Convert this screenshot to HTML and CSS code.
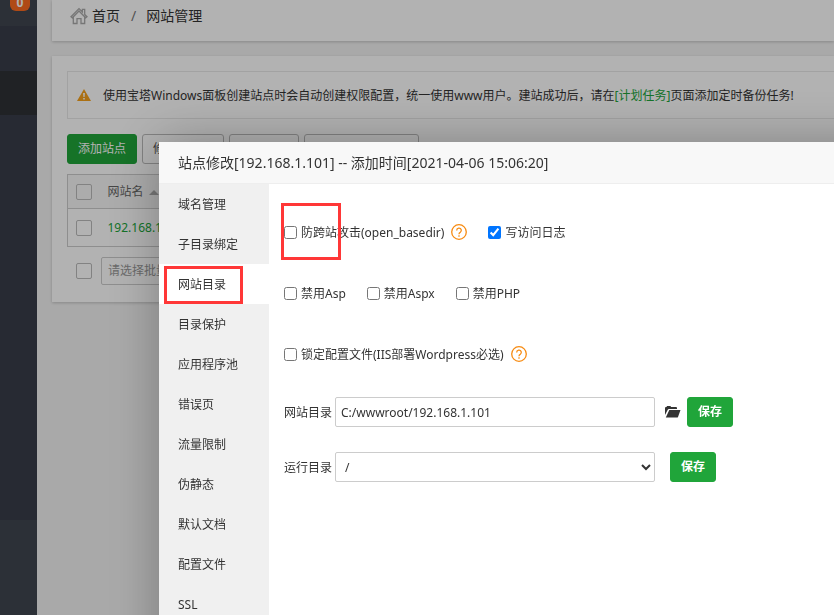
FILE: index.html
```html
<!DOCTYPE html>
<html lang="zh-CN">
<head>
<meta charset="utf-8">
<title>网站管理</title>
<link rel="stylesheet" href="styles.css">
</head>
<body>
<div class="page">
  <nav class="sidebar">
    <div class="sidebar-top"><span class="badge">0</span></div>
    <div class="sidebar-item"></div>
    <div class="sidebar-item current"></div>
    <div class="sidebar-rest"></div>
  </nav>
  <main class="main">
    <header class="crumbs">
      <svg class="home" viewBox="0 0 18 18" aria-hidden="true"><path d="M1 9.8 9 1.6l3.4 3.4V2.4h2.3v5L17 9.8l-1.3 1L9 4 2.300 10.800zM3.300 10.200V16.500H7v-4.800h4v4.800h3.700V10.200"/></svg>
      <a href="#">首页</a><span class="slash">/</span><span>网站管理</span>
    </header>
    <section class="panel">
      <div class="notice">
        <svg class="warn" viewBox="0 0 14 12" aria-hidden="true"><path class="warn-shape" d="M7 0 14 12H0z"/><path class="warn-mark" d="M6.100 4h1.800l-.3 4H6.400zM6.200 9h1.600v1.500H6.200z"/></svg>
        <p>使用宝塔Windows面板创建站点时会自动创建权限配置，统一使用www用户。建站成功后，请在<a href="#">[计划任务]</a>页面添加定时备份任务!</p>
      </div>
      <div class="toolbar">
        <button class="btn btn-green" type="button">添加站点</button>
        <button class="btn btn-plain" type="button">修改默认页</button>
        <button class="btn btn-plain" type="button" aria-label="默认站点"></button>
        <button class="btn btn-plain btn-wide" type="button" aria-label="命令行版本"></button>
      </div>
      <table class="sites">
        <thead>
          <tr><th class="pick"><input type="checkbox" class="tick" aria-label="全选"></th><th>网站名<span class="sort"></span></th></tr>
        </thead>
        <tbody>
          <tr><td class="pick"><input type="checkbox" class="tick" aria-label="选择站点"></td><td><a href="#">192.168.1.101</a></td></tr>
        </tbody>
      </table>
      <div class="batch">
        <input type="checkbox" class="tick" aria-label="批量选择">
        <select class="batch-select" aria-label="批量操作"><option>请选择批量操作</option></select>
      </div>
    </section>
  </main>
</div>
<div class="backdrop"></div>
<div class="dialog" role="dialog" aria-labelledby="dialog-title">
  <h1 class="dialog-title" id="dialog-title">站点修改[192.168.1.101] -- 添加时间[2021-04-06 15:06:20]</h1>
  <div class="dialog-body">
    <nav class="menu">
      <a href="#">域名管理</a>
      <a href="#">子目录绑定</a>
      <a href="#" class="active">网站目录</a>
      <a href="#">目录保护</a>
      <a href="#">应用程序池</a>
      <a href="#">错误页</a>
      <a href="#">流量限制</a>
      <a href="#">伪静态</a>
      <a href="#">默认文档</a>
      <a href="#">配置文件</a>
      <a href="#">SSL</a>
    </nav>
    <form class="settings">
      <div class="checks">
        <div class="check marked"><input type="checkbox" id="basedir"><label for="basedir">防跨站攻击(open_basedir)</label><a class="help" href="#" aria-label="帮助"><svg viewBox="0 0 16 16"><circle cx="8" cy="8" r="7.300"/><path d="M5.700 6.500a2.300 2.300 0 1 1 3.500 1.900Q8 9 8 10.200"/><path d="M8 11.300v1.400"/></svg></a></div>
        <div class="check"><input type="checkbox" id="log" checked><label for="log">写访问日志</label></div>
      </div>
      <div class="checks">
        <div class="check"><input type="checkbox" id="asp"><label for="asp">禁用Asp</label></div>
        <div class="check"><input type="checkbox" id="aspx"><label for="aspx">禁用Aspx</label></div>
        <div class="check"><input type="checkbox" id="php"><label for="php">禁用PHP</label></div>
      </div>
      <div class="checks">
        <div class="check"><input type="checkbox" id="lock"><label for="lock">锁定配置文件(IIS部署Wordpress必选)</label><a class="help" href="#" aria-label="帮助"><svg viewBox="0 0 16 16"><circle cx="8" cy="8" r="7.300"/><path d="M5.700 6.500a2.300 2.300 0 1 1 3.500 1.900Q8 9 8 10.200"/><path d="M8 11.300v1.400"/></svg></a></div>
      </div>
      <div class="field">
        <label for="path">网站目录</label>
        <input class="control" id="path" type="text" value="C:/wwwroot/192.168.1.101">
        <svg class="folder" viewBox="0 0 16 12" aria-hidden="true"><path d="M0 9V2Q0 1 1 1H1.500L2 0H5.500L6 1H11Q12 1 12 2V3H4Q3 3 2.600 4zM4.300 4H15.500L13 11Q12.700 11.500 12 11.500H.8z"/></svg>
        <button class="btn btn-green save" type="button">保存</button>
      </div>
      <div class="field">
        <label for="run">运行目录</label>
        <select class="control" id="run"><option>/</option></select>
        <button class="btn btn-green save" type="button">保存</button>
      </div>
    </form>
  </div>
</div>
</body>
</html>
```
FILE: styles.css
```css
*, *::before, *::after { box-sizing: border-box; }

body {
  margin: 0;
  height: 100vh;
  overflow: hidden;
  background: #f3f3f3;
  color: #333;
  font: 12px/20px "Noto Sans", "Noto Sans CJK SC", sans-serif;
}

a { color: inherit; text-decoration: none; }
p { margin: 0; }
button, input, select { font: inherit; color: inherit; }

.page { display: flex; height: 100vh; }

.sidebar {
  display: flex;
  flex-direction: column;
  flex: 0 0 37px;
  background: #3f454f;
}
.sidebar-top { height: 26px; padding-left: 10px; }
.badge {
  display: block;
  width: 20px;
  height: 11px;
  border-radius: 0 0 6px 6px;
  background: #fb6a20;
  color: #fff;
  font-weight: 700;
  line-height: 6px;
  text-align: center;
}
.sidebar-item { height: 45px; background: #383d4a; }
.sidebar-item.current { height: 44px; background: #2f3236; }
.sidebar-rest { height: 405px; background: #383d4a; }

.main { flex: 1; min-width: 0; padding-left: 15px; }

.crumbs {
  display: flex;
  align-items: center;
  height: 41px;
  padding: 0 18px 9px;
  background: #fff;
  box-shadow: 0 1px 3px rgba(0, 0, 0, .2);
  font-size: 14px;
}
.home { width: 18px; height: 18px; margin-right: 4px; fill: none; stroke: #aaa; stroke-width: 1.3; }
.slash { margin: 0 10px 0 11px; color: #777; }

.panel {
  margin-top: 15px;
  padding: 15px 0 17px 15px;
  background: #fff;
  box-shadow: 0 1px 3px rgba(0, 0, 0, .2);
}
.notice {
  display: flex;
  align-items: center;
  gap: 12px;
  height: 48px;
  padding-left: 9px;
  border: 1px solid #e8e8e8;
  border-right: 0;
  white-space: nowrap;
}
.notice p { padding-top: 2px; }
.notice a, .sites a { color: #20a53a; }
.warn { width: 14px; height: 12px; }
.warn-shape { fill: #f5a11c; }
.warn-mark { fill: #fff; }

.toolbar { display: flex; gap: 5px; margin: 15px 0 10px; }
.btn {
  height: 30px;
  padding: 0 10px;
  border: 1px solid #20a53a;
  border-radius: 3px;
  white-space: nowrap;
}
.btn-green { background: #20a53a; color: #fff; }
.btn-plain { min-width: 70px; border-color: #bbb; background: #fff; color: #555; }
.btn-wide { min-width: 115px; }

.tick {
  appearance: none;
  flex: none;
  display: block;
  width: 16px;
  height: 16px;
  margin: 0;
  border: 1px solid #bbb;
  border-radius: 2px;
}
.sites {
  width: 100%;
  border: 1px solid #ccc;
  border-collapse: collapse;
  border-right: 0;
  text-align: left;
}
.sites th { height: 34px; padding: 0; border-bottom: 1px solid #ccc; background: #f6f6f6; color: #666; font-weight: 400; }
.sites td { height: 38px; padding: 0; }
.sites .pick { width: 40px; padding-left: 8px; }
.sort {
  display: inline-block;
  margin-left: 5px;
  border: 5px solid transparent;
  border-top: 0;
  border-bottom-color: #aaa;
  vertical-align: middle;
}
.batch { display: flex; align-items: center; gap: 9px; margin-top: 10px; padding-left: 9px; }
.batch-select {
  appearance: none;
  width: 140px;
  height: 28px;
  padding: 0 6px;
  border: 1px solid #ccc;
  border-radius: 2px;
  background: #fff;
  color: #999;
}

.backdrop { position: fixed; inset: 0; background: rgba(0, 0, 0, .3); }

.dialog {
  position: fixed;
  top: 142px;
  right: -60px;
  bottom: -60px;
  left: 159px;
  display: flex;
  flex-direction: column;
  background: #fff;
  box-shadow: 1px 1px 50px rgba(0, 0, 0, .3);
}
.dialog-title {
  margin: 0;
  padding: 0 19px;
  border-bottom: 1px solid #eee;
  background: #f8f8f8;
  font-size: 14px;
  font-weight: 400;
  line-height: 41px;
}
.dialog-body { display: flex; flex: 1; }
.menu { width: 110px; background: #f0f0f0; }
.menu a { position: relative; display: block; padding: 2px 0 0 19px; line-height: 38px; }
.menu .active { background: #fff; }
.menu .active::after {
  content: "";
  position: absolute;
  top: 2px;
  left: 5px;
  width: 79px;
  height: 38px;
  border: 3px solid #ff3737;
}

.settings { flex: 1; padding: 38px 0 0 15px; }
.checks { display: flex; gap: 21px; margin-bottom: 41px; }
.check { position: relative; display: flex; align-items: center; height: 20px; }
.check input { width: 13px; height: 13px; margin: 0 4px 0 0; }
.check label, .field label { padding-top: 2px; }
.marked::after {
  content: "";
  position: absolute;
  top: -19px;
  left: -3px;
  width: 60px;
  height: 57px;
  border: 3px solid #ff3737;
  pointer-events: none;
}
.help { width: 16px; height: 16px; margin-left: 7px; }
.help svg { display: block; fill: none; stroke: #f78b12; stroke-width: 1.3; }

.field { display: flex; align-items: center; margin: -8px 0 33px; }
.field label { width: 51px; }
.control {
  width: 320px;
  height: 30px;
  padding: 0 5px;
  border: 1px solid #ccc;
  border-radius: 2px;
  background: #fff;
}
.folder { width: 16px; height: 12px; margin: 0 6px 0 10px; fill: #333; }
.save { font-weight: 700; }
.control + .save { margin-left: 15px; }
```
